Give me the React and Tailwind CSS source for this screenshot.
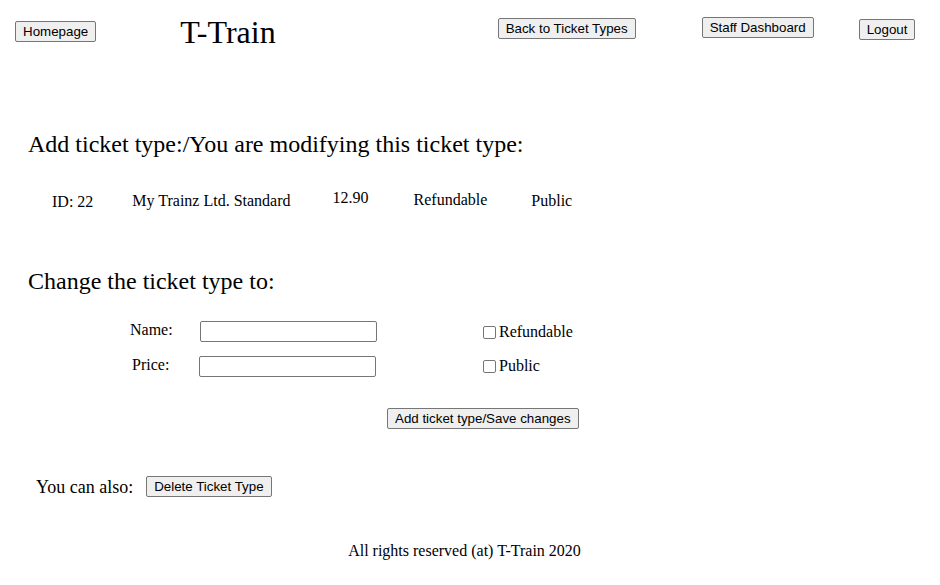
const serif = { fontFamily: '"Liberation Serif", "Times New Roman", serif' };

function Btn({ children, className = "" }) {
    return (
        <button
            className={`bg-[#efefef] border border-[#767676] rounded-[2px] px-[7px] h-[21px] leading-[17px] text-[13.33px] text-black font-['Liberation_Sans',Arial,sans-serif] ${className}`}
        >
            {children}
        </button>
    );
}

export default function App() {
    return (
        <div className="min-h-[585px] w-[940px] bg-white text-black font-['Liberation_Serif','Times_New_Roman',serif]" style={serif}>
            {/* HEADER */}
            <div className="flex items-start h-[60px]">
                <Btn className="mt-[21px] ml-[15px]">Homepage</Btn>
                <h1 className="ml-[84px] mt-[14px] text-[32px] leading-[37px] font-normal">T-Train</h1>
                <Btn className="mt-[18px] ml-[222px]">Back to Ticket Types</Btn>
                <Btn className="mt-[17px] ml-[66px]">Staff Dashboard</Btn>
                <Btn className="mt-[19px] ml-[45px]">Logout</Btn>
            </div>

            {/* CURRENT TICKET TYPE */}
            <h2 className="mt-[70px] ml-[28px] text-[24px] leading-[28px] font-normal">
                Add ticket type:/You are modifying this ticket type:
            </h2>
            <div className="flex items-start mt-[31px] text-[16px] leading-[18px]">
                <span className="ml-[52px] mt-[4px]">ID: 22</span>
                <span className="ml-[39px] mt-[3px]">My Trainz Ltd. Standard</span>
                <span className="ml-[42px]">12.90</span>
                <span className="ml-[45px] mt-[2px]">Refundable</span>
                <span className="ml-[44px] mt-[3px]">Public</span>
            </div>

            {/* FORM */}
            <h2 className="mt-[56px] ml-[28px] text-[24px] leading-[28px] font-normal">
                Change the ticket type to:
            </h2>
            <div className="mt-[26px] flex flex-col gap-[14px]">
                <div className="flex items-start h-[21px]">
                    <span className="ml-[130px] w-[70px] text-[16px] leading-[18px]">Name:</span>
                    <input type="text" className="w-[177px] h-[21px] border border-[#767676] rounded-[2px] bg-white" />
                    <label className="ml-[106px] mt-[2px] flex items-center text-[16px] leading-[18px]">
                        <input type="checkbox" className="w-[13px] h-[13px] mr-[3px] appearance-none border border-[#767676] rounded-[2px] bg-white" />
                        Refundable
                    </label>
                </div>
                <div className="flex items-start h-[21px]">
                    <span className="ml-[132px] w-[67px] text-[16px] leading-[18px]">Price:</span>
                    <input type="text" className="w-[177px] h-[21px] border border-[#767676] rounded-[2px] bg-white" />
                    <label className="ml-[107px] mt-[1px] flex items-center text-[16px] leading-[18px]">
                        <input type="checkbox" className="w-[13px] h-[13px] mr-[3px] appearance-none border border-[#767676] rounded-[2px] bg-white" />
                        Public
                    </label>
                </div>
            </div>
            <div className="mt-[31px] flex">
                <Btn className="ml-[387px]">Add ticket type/Save changes</Btn>
            </div>

            {/* DELETE */}
            <div className="mt-[47px] flex items-center">
                <span className="ml-[36px] text-[18px] leading-[20px]">You can also:</span>
                <Btn className="ml-[13px]">Delete Ticket Type</Btn>
            </div>

            {/* FOOTER */}
            <footer className="mt-[45px] text-center text-[16px] leading-[18px] pr-[11px]">
                All rights reserved (at) T-Train 2020
            </footer>
        </div>
    );
}
